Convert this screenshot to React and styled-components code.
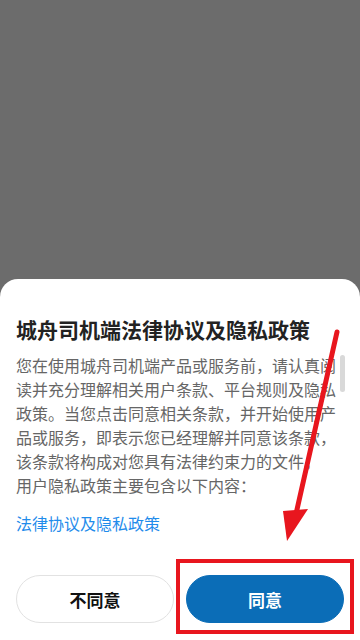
import styled, { createGlobalStyle } from "styled-components";

const GlobalStyle = createGlobalStyle`
  html, body {
    margin: 0;
    padding: 0;
    background: #6c6c6c;
  }
  body {
    font-family: "Noto Sans CJK SC", "Noto Sans", sans-serif;
  }
  * {
    box-sizing: border-box;
  }
`;

const Screen = styled.div`
  position: relative;
  width: 360px;
  height: 640px;
  display: flex;
  flex-direction: column;
  overflow: hidden;
`;

const Backdrop = styled.div`
  flex: 1;
  background: #6c6c6c;
`;

const Sheet = styled.div`
  background: #ffffff;
  border-radius: 18px 18px 0 0;
  padding: 36px 15px 17px 16px;
  display: flex;
  flex-direction: column;
`;

const Title = styled.h2`
  margin: 0;
  font-size: 21px;
  line-height: 28px;
  font-weight: 700;
  color: #222222;
  letter-spacing: 0;
`;

const ScrollArea = styled.div`
  margin-top: 10px;
  display: flex;
  gap: 4px;
  height: 144px;
  overflow: hidden;
`;

const Body = styled.p`
  margin: 0;
  width: 324px;
  font-size: 16px;
  line-height: 24px;
  color: #666666;
`;

const Track = styled.div`
  width: 5px;
  padding-top: 2px;
  flex-shrink: 0;
`;

const Thumb = styled.div`
  width: 5px;
  height: 37px;
  border-radius: 3px;
  background: #d9d9d9;
`;

const PolicyLink = styled.a`
  margin-top: 14px;
  font-size: 16px;
  line-height: 24px;
  color: #1f8ceb;
  text-decoration: none;
`;

const Actions = styled.div`
  margin-top: 40px;
  display: grid;
  grid-template-columns: 1fr 1fr;
  gap: 12px;
  padding-right: 1px;
`;

const Button = styled.button`
  height: 48px;
  border-radius: 24px;
  font-family: inherit;
  font-size: 17px;
  font-weight: 700;
  border: 1px solid ${(p) => (p.$primary ? "#0b6db7" : "#e2e2e2")};
  background: ${(p) => (p.$primary ? "#0b6db7" : "#ffffff")};
  color: ${(p) => (p.$primary ? "#ffffff" : "#111111")};
`;

const HighlightBox = styled.div`
  position: absolute;
  left: 176px;
  top: 559px;
  width: 178px;
  height: 75px;
  border: 4px solid #e8161e;
  pointer-events: none;
`;

const ArrowLayer = styled.svg`
  position: absolute;
  left: 0;
  top: 0;
  width: 360px;
  height: 640px;
  pointer-events: none;
`;

export default function App() {
  return (
    <>
      <GlobalStyle />
      <Screen>
        <Backdrop />
        <Sheet>
          <Title>城舟司机端法律协议及隐私政策</Title>
          <ScrollArea>
            <Body>
              您在使用城舟司机端产品或服务前，请认真阅读并充分理解相关用户条款、平台规则及隐私政策。当您点击同意相关条款，并开始使用产品或服务，即表示您已经理解并同意该条款，该条款将构成对您具有法律约束力的文件。
              <br />
              用户隐私政策主要包含以下内容：
            </Body>
            <Track>
              <Thumb />
            </Track>
          </ScrollArea>
          <PolicyLink href="#">法律协议及隐私政策</PolicyLink>
          <Actions>
            <Button>不同意</Button>
            <Button $primary>同意</Button>
          </Actions>
        </Sheet>
        <HighlightBox />
        <ArrowLayer viewBox="0 0 360 640">
          <line
            x1="337"
            y1="332"
            x2="296"
            y2="514"
            stroke="#e8161e"
            strokeWidth="5"
            strokeLinecap="round"
          />
          <polygon points="283,511 308,509 287,541" fill="#e8161e" />
        </ArrowLayer>
      </Screen>
    </>
  );
}
